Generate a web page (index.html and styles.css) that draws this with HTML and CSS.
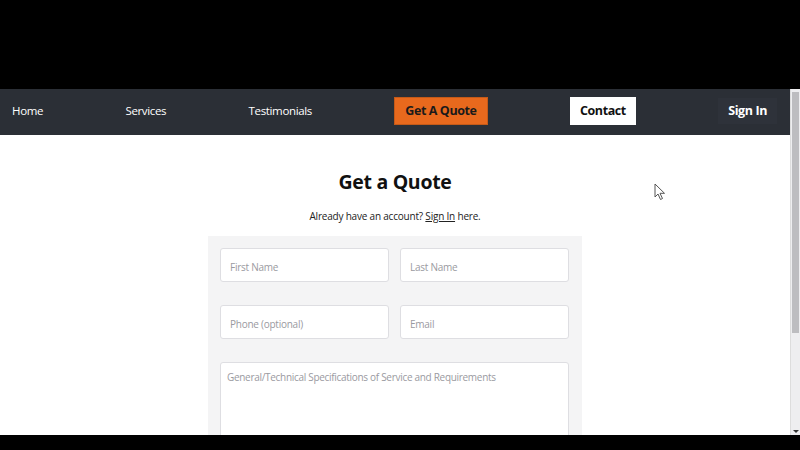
FILE: index.html
```html
<!DOCTYPE html>
<html lang="en">
<head>
<meta charset="utf-8">
<title>Get a Quote</title>
<link rel="stylesheet" href="styles.css">
</head>
<body>
<div class="screen">
  <div class="bar-top"></div>
  <div class="viewport">
    <div class="page">
      <nav class="nav">
        <a class="nav-link">Home</a>
        <a class="nav-link">Services</a>
        <a class="nav-link">Testimonials</a>
        <a class="btn btn-orange">Get A Quote</a>
        <a class="btn btn-white">Contact</a>
        <a class="btn btn-dark">Sign In</a>
      </nav>
      <main class="main">
        <h1 class="title">Get a Quote</h1>
        <p class="sub">Already have an account? <a class="sub-link">Sign In</a> here.</p>
        <form class="card">
          <div class="row">
            <input class="field" placeholder="First Name">
            <input class="field" placeholder="Last Name">
          </div>
          <div class="row">
            <input class="field" placeholder="Phone (optional)">
            <input class="field" placeholder="Email">
          </div>
          <textarea class="area" placeholder="General/Technical Specifications of Service and Requirements"></textarea>
        </form>
      </main>
      <svg class="cursor" width="12" height="18" viewBox="0 0 12 18"><path d="M1 1 L1 14 L4 11 L6.5 16.5 L8.5 15.5 L6 10.3 L10.5 10.3 Z" fill="#fff" stroke="#555" stroke-width="1"/></svg>
    </div>
    <div class="scrollbar">
      <div class="thumb"></div>
      <div class="arrow"></div>
    </div>
  </div>
  <div class="bar-bottom"></div>
</div>
</body>
</html>
```
FILE: styles.css
```css
* { box-sizing: border-box; }
html, body { margin: 0; padding: 0; background: #000; }
body { font-family: "Open Sans", "Noto Sans", sans-serif; }
.screen { width: 800px; height: 450px; display: flex; flex-direction: column; overflow: hidden; }
.bar-top { height: 89px; background: #000; flex: none; }
.bar-bottom { flex: 1; background: #000; }
.viewport { height: 346px; display: flex; flex: none; }
.page { width: 790px; background: #fff; position: relative; overflow: hidden; }
.nav { height: 46px; background: #2b2f36; display: flex; align-items: center; justify-content: space-between; padding: 0 13px 3px 12px; }
.nav-link { color: #fff; font-size: 11.5px; letter-spacing: -0.35px; }
.btn { font-size: 12.5px; font-weight: 700; height: 28px; display: flex; align-items: center; padding: 0 10px; letter-spacing: -0.4px; }
.btn-orange { background: #e8691d; color: #1a1a1a; border: 1px solid #c55a18; }
.btn-white { background: #fff; color: #111; padding: 0 10px; }
.btn-dark { background: #2e323a; color: #fff; padding: 0 10px; height: 26px; }
.main { display: flex; flex-direction: column; align-items: center; }
.title { margin: 35px 0 0; font-size: 19.5px; font-weight: 700; color: #111; line-height: 24px; letter-spacing: -0.3px; }
.sub { margin: 15px 0 0; font-size: 10px; color: #222; line-height: 14px; letter-spacing: -0.2px; }
.sub-link { text-decoration: underline; color: #222; }
.card { margin-top: 13px; width: 374px; background: #f4f4f5; padding: 12px 12px 0; display: flex; flex-direction: column; gap: 23px; height: 240px; }
.row { display: flex; gap: 11px; }
.field { width: 169px; height: 34px; border: 1px solid #dedee2; border-radius: 3px; background: #fff; padding: 3px 9px 0; font-family: inherit; font-size: 10px; letter-spacing: -0.25px; outline: none; }
.area { width: 349px; height: 120px; flex: none; border: 1px solid #dedee2; border-radius: 3px; background: #fff; padding: 7px 6px; font-family: inherit; font-size: 10px; letter-spacing: -0.3px; resize: none; outline: none; }
.field::placeholder, .area::placeholder { color: #9a9a9f; }
.cursor { position: absolute; left: 654px; top: 94px; }
.scrollbar { width: 10px; background: #eeeef0; position: relative; border-left: 1px solid #ddd; }
.thumb { position: absolute; left: 1px; right: 1px; top: 3px; height: 241px; background: #bdbdc0; }
.arrow { position: absolute; left: 2px; bottom: 2px; width: 0; height: 0; border-left: 3px solid transparent; border-right: 3px solid transparent; border-top: 3px solid #333; }
```
